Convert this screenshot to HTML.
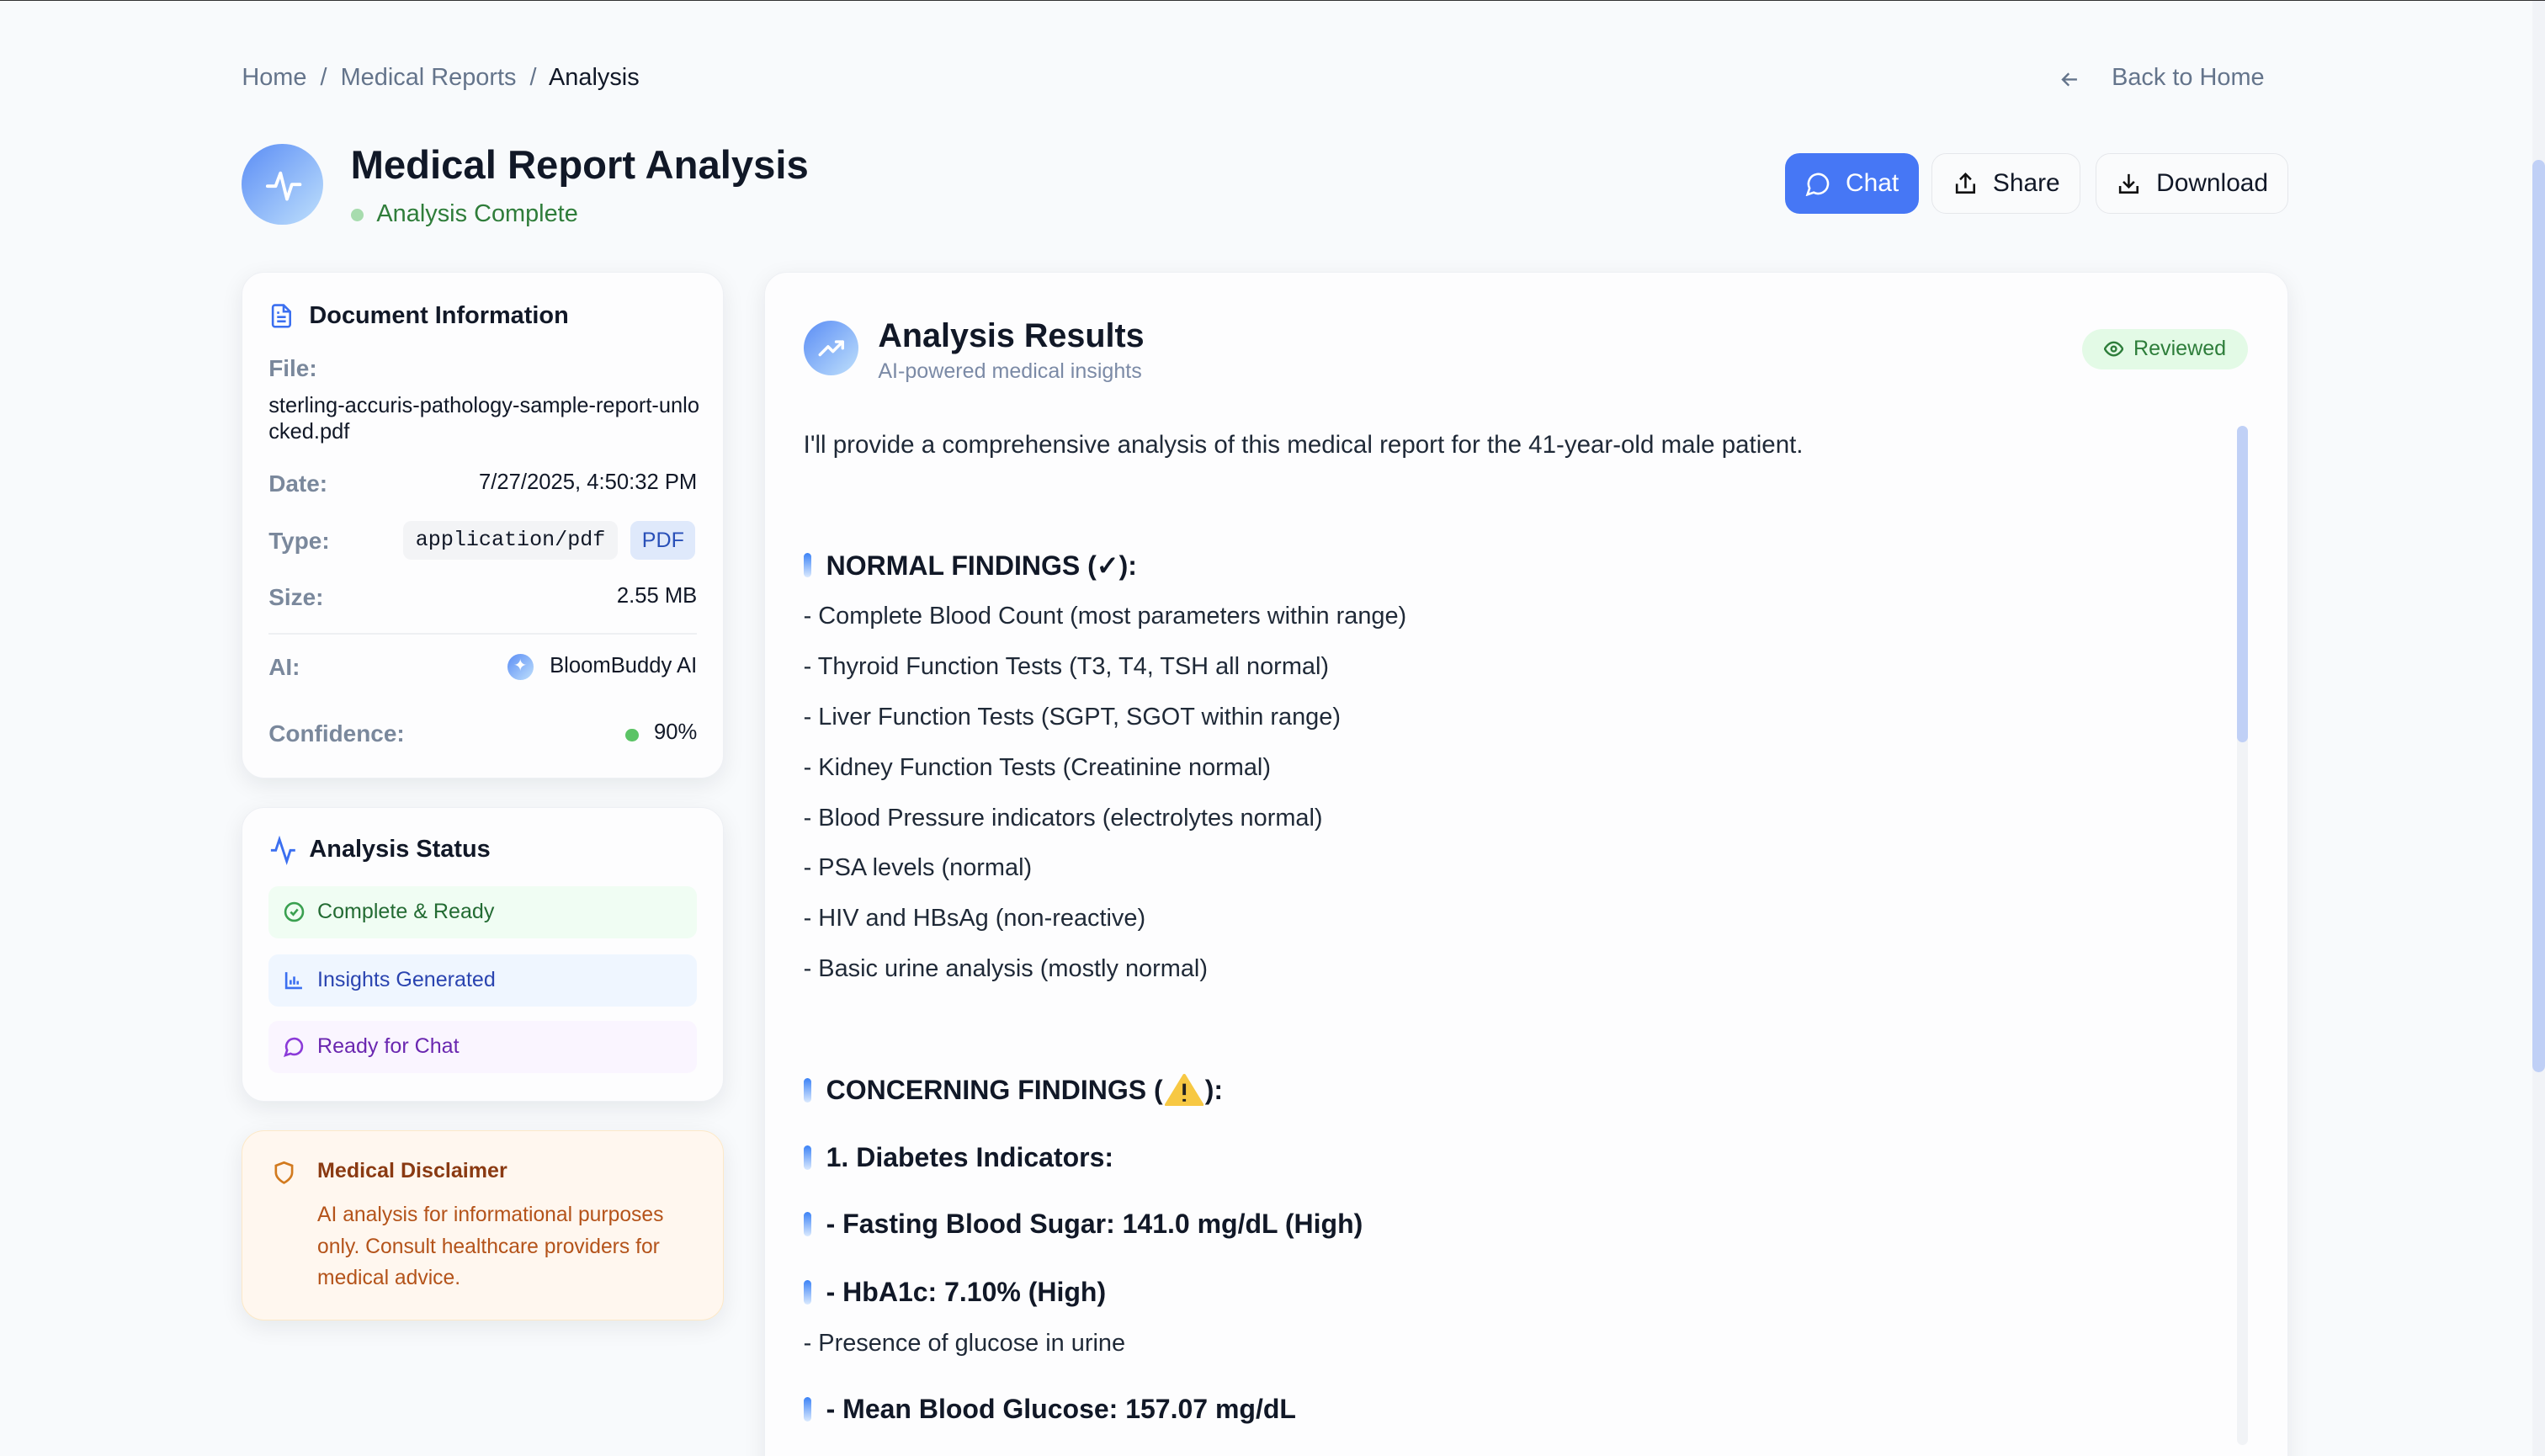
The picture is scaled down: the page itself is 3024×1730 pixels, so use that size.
<!DOCTYPE html>
<html><head><meta charset="utf-8"><style>
*{box-sizing:border-box;margin:0;padding:0}
html,body{width:3024px;height:1730px;overflow:hidden;background:#f8fafc}
#w{zoom:1.92857;width:1568px;height:897px;position:relative;font-family:"Liberation Sans",sans-serif;color:#111827;background:#f8fafc;border-top:1px solid #333}
.a{position:absolute}
.card{position:absolute;background:#fdfdfe;border-radius:14px;box-shadow:0 4px 14px rgba(15,23,42,.08);border:1px solid #eef0f4}
.lbl{color:#64748b;font-size:14.5px;font-weight:bold;opacity:.85}
.btn{position:absolute;top:94px;height:37px;border-radius:9px;border:1px solid #e5e7eb;background:#fafbfc;display:flex;align-items:center;justify-content:center;gap:9px;font-size:15.5px;color:#111827}
.row{position:absolute;left:16px;right:16px;height:32px;border-radius:6px;display:flex;align-items:center;gap:8px;padding-left:9px;font-size:13px}
.ln{position:absolute;left:495px;font-size:15px;color:#1f2937}
.h{position:absolute;left:495px;font-size:16.6px;font-weight:bold;color:#111827;display:flex;align-items:center;gap:9px}
.h:before{content:"";width:5px;height:15px;border-radius:3px;background:linear-gradient(#3b82f6,#dbeafe)}
</style></head><body><div id="w">
<div class="a" style="left:149px;top:39px;font-size:15px;color:#64748b">Home &nbsp;/&nbsp; Medical Reports &nbsp;/&nbsp; <span style="color:#111827">Analysis</span></div>
<svg class="a" style="left:1268px;top:41px" width="15" height="15" viewBox="0 0 24 24" fill="none" stroke="#64748b" stroke-width="2"><path d="M19 12H5M11 6l-6 6 6 6"/></svg>
<div class="a" style="left:1301px;top:39px;font-size:15px;color:#64748b">Back to Home</div>
<div class="a" style="left:149px;top:88px;width:50px;height:50px;border-radius:50%;background:linear-gradient(135deg,#5b8df5,#bfe0fc)"><svg width="50" height="50" viewBox="0 0 50 50"><path d="M16 26h5l3-8 4 16 3-9h5" fill="none" stroke="#fff" stroke-width="2" stroke-linecap="round" stroke-linejoin="round"/></svg></div>
<div class="a" style="left:216px;top:87px;font-size:24.5px;font-weight:bold">Medical Report Analysis</div>
<div class="a" style="left:216px;top:123px;font-size:15px;color:#2f7d3a"><span style="display:inline-block;width:8px;height:8px;border-radius:50%;background:#a7dcae;margin-right:8px"></span>Analysis Complete</div>
<div class="btn" style="left:1100px;width:82px;background:#4677f5;border-color:#4677f5;color:#fff"><svg width="16" height="16" viewBox="0 0 24 24" fill="none" stroke="#fff" stroke-width="2"><path d="M7.9 20A9 9 0 1 0 4 16.1L2 22z"/></svg>Chat</div>
<div class="btn" style="left:1190px;width:92px"><svg width="16" height="16" viewBox="0 0 24 24" fill="none" stroke="#111" stroke-width="2"><path d="M4 12v8h16v-8M12 3v13M7 8l5-5 5 5"/></svg>Share</div>
<div class="btn" style="left:1291px;width:119px"><svg width="16" height="16" viewBox="0 0 24 24" fill="none" stroke="#111" stroke-width="2"><path d="M4 14v6h16v-6M12 3v12M7 10l5 5 5-5"/></svg>Download</div>

<div class="card" style="left:149px;top:167px;width:297px;height:312px">
<svg class="a" style="left:16px;top:18px" width="16" height="17" viewBox="0 0 24 24" fill="none" stroke="#3b6ff0" stroke-width="2"><path d="M14 2H6a2 2 0 0 0-2 2v16a2 2 0 0 0 2 2h12a2 2 0 0 0 2-2V8zM14 2v6h6M8 13h8M8 17h8M8 9h2"/></svg>
<div class="a" style="left:41px;top:18px;font-size:15px;font-weight:bold">Document Information</div>
<div class="a lbl" style="left:16px;top:51px">File:</div>
<div class="a" style="left:16px;top:74px;font-size:13.2px;line-height:16px;width:266px;word-break:break-all">sterling-accuris-pathology-sample-report-unlocked.pdf</div>
<div class="a lbl" style="left:16px;top:122px">Date:</div>
<div class="a" style="right:16px;top:122px;font-size:13.3px">7/27/2025, 4:50:32 PM</div>
<div class="a lbl" style="left:16px;top:157px">Type:</div>
<div class="a" style="left:99px;top:153px;width:132px;height:24px;background:#f3f4f6;border-radius:5px;font-family:'Liberation Mono',monospace;font-size:13px;line-height:24px;text-align:center">application/pdf</div>
<div class="a" style="left:239px;top:153px;width:40px;height:24px;background:#dfe9fb;border-radius:5px;font-size:13px;line-height:24px;text-align:center;color:#2950b8">PDF</div>
<div class="a lbl" style="left:16px;top:192px">Size:</div>
<div class="a" style="right:16px;top:192px;font-size:13.3px">2.55 MB</div>
<div class="a" style="left:16px;right:16px;top:222px;height:1px;background:#eef0f3"></div>
<div class="a lbl" style="left:16px;top:235px">AI:</div>
<div class="a" style="left:163px;top:235px;width:16px;height:16px;border-radius:50%;background:linear-gradient(135deg,#5b8df5,#bfe0fc);color:#fff;font-size:10px;text-align:center;line-height:16px">✦</div>
<div class="a" style="right:16px;top:235px;font-size:13.3px;font-weight:500">BloomBuddy AI</div>
<div class="a lbl" style="left:16px;top:276px">Confidence:</div>
<div class="a" style="left:236px;top:281px;width:8px;height:8px;border-radius:50%;background:#5cc466"></div>
<div class="a" style="right:16px;top:276px;font-size:13.3px">90%</div>
</div>

<div class="card" style="left:149px;top:497px;width:297px;height:181px">
<svg class="a" style="left:16px;top:17px" width="18" height="18" viewBox="0 0 24 24" fill="none" stroke="#3b6ff0" stroke-width="2"><path d="M2 12h4l3-9 6 18 3-9h4"/></svg>
<div class="a" style="left:41px;top:17px;font-size:15px;font-weight:bold">Analysis Status</div>
<div class="row" style="top:48px;background:#f0fdf3;color:#236b33"><svg width="13" height="13" viewBox="0 0 24 24" fill="none" stroke="#3aa050" stroke-width="2.5"><circle cx="12" cy="12" r="10"/><path d="M8 12l3 3 5-6"/></svg>Complete &amp; Ready</div>
<div class="row" style="top:90px;background:#eff6ff;color:#2a44b0"><svg width="13" height="13" viewBox="0 0 24 24" fill="none" stroke="#3b6ff0" stroke-width="2.5"><path d="M3 3v18h18M8 17v-5M12 17V8M16 17v-4"/></svg>Insights Generated</div>
<div class="row" style="top:131px;background:#faf5ff;color:#6a27b0"><svg width="13" height="13" viewBox="0 0 24 24" fill="none" stroke="#8b3ad8" stroke-width="2.5"><path d="M7.9 20A9 9 0 1 0 4 16.1L2 22z"/></svg>Ready for Chat</div>
</div>

<div class="card" style="left:149px;top:696px;width:297px;height:117px;background:#fff7ef;border-color:#fde9c8">
<svg class="a" style="left:18px;top:17px" width="15" height="17" viewBox="0 0 24 24" fill="none" stroke="#d27a1e" stroke-width="2.2"><path d="M12 22s8-4 8-10V5l-8-3-8 3v7c0 6 8 10 8 10z"/></svg>
<div class="a" style="left:46px;top:17px;font-size:13px;font-weight:bold;color:#8a3a12">Medical Disclaimer</div>
<div class="a" style="left:46px;top:42px;width:228px;font-size:12.8px;line-height:19.5px;color:#b4531a">AI analysis for informational purposes only. Consult healthcare providers for medical advice.</div>
</div>

<div class="card" style="left:471px;top:167px;width:939px;height:760px"></div>
<div class="a" style="left:495px;top:197px;width:34px;height:34px;border-radius:50%;background:linear-gradient(135deg,#5b8df5,#bfe0fc)"><svg width="34" height="34" viewBox="0 0 34 34"><path d="M10 21l5-5 3 3 6-6M20 13h4v4" fill="none" stroke="#fff" stroke-width="1.8" stroke-linecap="round" stroke-linejoin="round"/></svg></div>
<div class="a" style="left:541px;top:195px;font-size:20.5px;font-weight:bold">Analysis Results</div>
<div class="a" style="left:541px;top:221px;font-size:13px;color:#7b8aa6">AI-powered medical insights</div>
<div class="a" style="left:1283px;top:202px;width:102px;height:25px;border-radius:13px;background:#e3fae6;color:#2d7d3a;font-size:13px;display:flex;align-items:center;justify-content:center;gap:6px"><svg width="12" height="12" viewBox="0 0 24 24" fill="none" stroke="#2d7d3a" stroke-width="2.5"><path d="M1 12s4-8 11-8 11 8 11 8-4 8-11 8S1 12 1 12z"/><circle cx="12" cy="12" r="3"/></svg>Reviewed</div>
<div class="a" style="left:1378px;top:262px;width:7px;height:628px;border-radius:4px;background:#f1f3f6"></div>
<div class="a" style="left:1378px;top:262px;width:7px;height:195px;border-radius:4px;background:#c0d0f6"></div>

<div class="ln" style="top:265px;font-size:15.3px">I'll provide a comprehensive analysis of this medical report for the 41-year-old male patient.</div>
<div class="h" style="top:338px">NORMAL FINDINGS (✓):</div>
<div class="ln" style="top:371px">- Complete Blood Count (most parameters within range)</div>
<div class="ln" style="top:402px">- Thyroid Function Tests (T3, T4, TSH all normal)</div>
<div class="ln" style="top:433px">- Liver Function Tests (SGPT, SGOT within range)</div>
<div class="ln" style="top:464px">- Kidney Function Tests (Creatinine normal)</div>
<div class="ln" style="top:495px">- Blood Pressure indicators (electrolytes normal)</div>
<div class="ln" style="top:526px">- PSA levels (normal)</div>
<div class="ln" style="top:557px">- HIV and HBsAg (non-reactive)</div>
<div class="ln" style="top:588px">- Basic urine analysis (mostly normal)</div>
<div class="h" style="top:661px">CONCERNING FINDINGS (<svg width="24" height="20" viewBox="0 0 24 20" style="margin:0 -8px"><path d="M12 1L23 19H1z" fill="#f7c843" stroke="#f7c843" stroke-width="2" stroke-linejoin="round"/><path d="M12 6v7M12 15.5v1.5" stroke="#222" stroke-width="2"/></svg>):</div>
<div class="h" style="top:703px">1. Diabetes Indicators:</div>
<div class="h" style="top:744px">- Fasting Blood Sugar: 141.0 mg/dL (High)</div>
<div class="h" style="top:786px">- HbA1c: 7.10% (High)</div>
<div class="ln" style="top:819px">- Presence of glucose in urine</div>
<div class="h" style="top:858px">- Mean Blood Glucose: 157.07 mg/dL</div>

<div class="a" style="left:1560px;top:0;width:8px;height:897px;background:#f1f3f7"></div>
<div class="a" style="left:1560px;top:98px;width:8px;height:562px;border-radius:4px;background:#c0d0f6"></div>
</div></body></html>
